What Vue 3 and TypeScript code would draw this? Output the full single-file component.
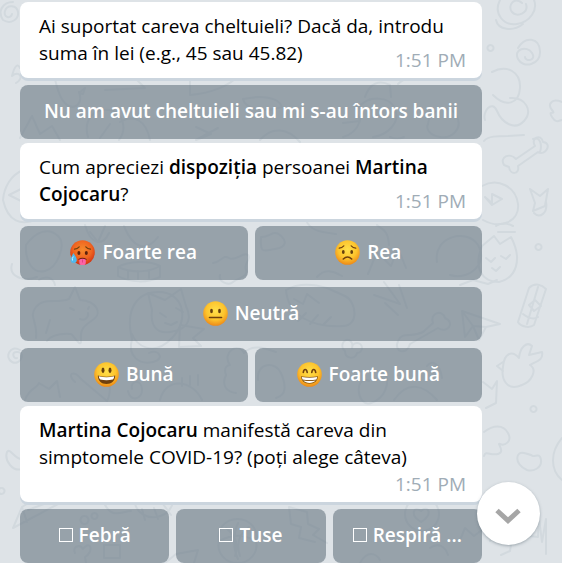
<script setup lang="ts">
import { ref } from 'vue'

type Mood = 'hot' | 'worried' | 'neutral' | 'happy' | 'beaming'

interface Part {
  text: string
  strong?: boolean
}

interface Answer {
  label: string
  mood?: Mood
}

interface Symptom {
  id: string
  label: string
}

const time = '1:51 PM'

const expenses: Part[] = [
  { text: 'Ai suportat careva cheltuieli? Dacă da, introdu suma în lei (e.g., 45 sau 45.82)' },
]

const moodQuestion: Part[] = [
  { text: 'Cum apreciezi ' },
  { text: 'dispoziția', strong: true },
  { text: ' persoanei ' },
  { text: 'Martina Cojocaru', strong: true },
  { text: '?' },
]

const symptomQuestion: Part[] = [
  { text: 'Martina Cojocaru', strong: true },
  { text: ' manifestă careva din simptomele COVID-19? (poți alege câteva)' },
]

const messages: { parts: Part[]; rows: Answer[][]; symptoms?: Symptom[] }[] = [
  { parts: expenses, rows: [[{ label: 'Nu am avut cheltuieli sau mi s-au întors banii' }]] },
  {
    parts: moodQuestion,
    rows: [
      [{ label: 'Foarte rea', mood: 'hot' }, { label: 'Rea', mood: 'worried' }],
      [{ label: 'Neutră', mood: 'neutral' }],
      [{ label: 'Bună', mood: 'happy' }, { label: 'Foarte bună', mood: 'beaming' }],
    ],
  },
  {
    parts: symptomQuestion,
    rows: [],
    symptoms: [
      { id: 'fever', label: 'Febră' },
      { id: 'cough', label: 'Tuse' },
      { id: 'breath', label: 'Respiră ...' },
    ],
  },
]

const selected = ref<string[]>([])
</script>

<template>
  <main class="chat">
    <svg class="wallpaper" viewBox="0 0 562 563" preserveAspectRatio="xMidYMid slice" aria-hidden="true">
      <!-- left edge -->
      <path d="M3 20c-6-9 0-18 10-18M3 20c8 5 16-1 15-8s-11-8-13-1 6 8 7 3M12 76c2-8 5-14 8-8M12 76c7-6 13 2 4 7M3 200c1-13 8-25 20-30M3 200c5 22 18 26 34 19M9 195l12-6v12zM20 350c-10-6-16 8-8 12s14-9 6-10-4 8-1 6M7 452c3-5 8 8 15 7M7 452c-3 9 6 20 15 17M2 488a3 3 0 1 1-1 0M13 528l9-21 38-24M13 528l45-24M22 507l5 15M28 510l32-12" />
      <!-- behind the first answer -->
      <path d="M55 79c3 14 7 24 14 27s14-3 10-14M105 90l40-2-10-10M79 93l6-5-2 6zM88 137c-5-17 6-29 21-27s18 20 10 30M120 122c14-8 26-2 30 18M110 124l-10 14M20 138l12-22 8 18 12-8 8 14M190 95v-17M190 95c23-2 40-10 48-19M196 127l15 7-15 6 22-12M243 99c18-4 36-2 39 8M243 99c2 10 22 14 39 8M260 140c12-14 28-12 40 2M343 137c18-5 21-24 15-33M343 123l17-2-5-13 15-9M365 97c5-15 15-17 25-12l1 12M359 107c9-11 30-12 36 2s-8 26-22 28M390 137c4 2 10 2 14 0M398 84c8-8 17-5 25-14M428 124c1-14 20-22 28-9s-4 24-16 22-14-9-12-13" />
      <!-- top right -->
      <path d="M496 20c2 10 17 12 27 4M500 0c-7 14 4 26 17 24s21-14 17-24M522 3c-8-7-15 3-10 9s17 1 14-8M518 48c7-12 21-11 22 3s-17 18-22 8 9-14 14-6-7 9-7 4M490 51a3 3 0 1 1 1 0M492 72c15-8 29 0 28 16s-14 20-27 7M510 98c16-1 23 13 14 23s-22 2-27-10-15 1-12 9M562 102c-10-4-15 2-10 8s-5-1 0 7 8 2 11 3M484 141c4-5 13-5 24-5l16-1M533 139c8-3 9 7 7 13" />
      <!-- bone, balloon and small signs -->
      <path d="M504 165c-5-8 6-13 12-6l19-13c-5-8 6-13 8-4 10 1 2 15-5 10l-20 14c2 9-8 9-9 1zM482 186c16-9 34 1 36 18s-17 26-35 16M485 197l7 6v-9l10 5-10 6zM530 189l10 7 8-7-3 17-12 5 2-8zM534 213c6 6 14 0 12-11M538 250a3 3 0 1 1 1 0" />
      <!-- behind the mood answers -->
      <path d="M26 245c10-14 23-18 32-9s-1 32-13 35-20-9-19-26M12 264c-4 13 12 18 25 13M85 225c6 21 18 21 24 8M90 232l8 10 7-16M124 226c11 27 25 23 34 11M118 267c10-6 31-7 42-1v11c-12 6-30 6-42-1zM118 267c14 6 30 6 42-1M128 271v7M138 271v8M149 270v8M213 263c9-1 10-9 16-5s15-7 19-3-5 8-2 15-9 8-13 12-15 0-13-7M261 237c8 1 12-8 19-2s7 12-5 14-15 5-14-12" />
      <path d="M306 220c4 11 15 12 30 14M377 225c5 5 11 4 12 20M437 262c-4-26 30-34 41-17s-8 36-28 30M482 246l12-10 6 8 11-7c12 23 5 41-12 45-17 0-26-14-17-36M486 258l5 4 4-4M501 256l5 3 4-4M492 268l4 3 4-4M513 226c-8-4-13-3-17 0M515 232h-17M368 274l9-22 14 14 7-18 8 20M317 277c8-9 16-6 25-1" />
      <path d="M36 338c2-17-8-21 0-31s20-3 33-8l6-12 5 13c17 1 22 13 14 19s-14 8-13 20-8-5-10-5-17-2-24 7M70 308l4 2M88 309l1-2M80 319c4 2 9-1 8-6M50 320l-4 13M39 280c5-4 14-4 16 5M132 339c-7-29 4-47 27-47s32 26 13 46-36 7-40-4M152 310l-4-17 17 7 16-11 5 17c8 17-2 24-16 26s-20-7-18-22M160 313l6 4M176 308l7 4M165 323l6 2 6-3M132 339c-5 18 8 26 21 23s5-14-4-9M180 325l24 4-11 9 8 8-22 1z" />
      <path d="M286 290c12-7 28-6 41-2l18 8c12 6 14 30-2 30-30 2-55-10-57-36M294 299l9 5 4-10 12 9M298 321l8-8M310 324l8-9M323 325l8-8M374 295l26 9-16-22M385 303l13 12M399 285l8 23M398 341c4-10 13-3 25-9l10-9c-4-9 9-15 12-5 11 5 2 16-7 10l-28 16c-3 12-17 8-12-3M462 311l38 13-14 3-7 13-6-14-8 11zM462 311l11 15 13 1M460 285l13-5 15 4 9-4" />
      <path d="M529 288c6-6 13-3 17 1l-12 36c-5 4-14 1-16-3zM538 287l-11 37M541 306l-7 5-5-6 6-5zM523 314c5 4 10 6 15 3M503 367c1-14 9-17 16-9 1-11 8-17 13-12l-3 9 13-3c2 9-8 10-12 13 8 5 1 17-8 20-16 7-21-7-19-18zM503 371l-6-5 6-4M533 412a3 3 0 1 1 1 0M483 382l9 7 5-8-1 22-10 5" />
      <path d="M75 382c-9-8-1-13 6-3l26 22c5-8 2-17 3-27M25 400c5-13 12-11 14-17l10 6 8-8 3 16M128 391c2 12 15 8 14-2s-12-9-10 0M160 400c6-24 33-20 42 0M182 378v8M190 376v9M198 375v10M226 375c-3-8 2-10 4-10-9-12 8-24 14-12 9-10 23-4 32-1M226 375c-5 11 1 17 10 18M258 380c-2-18 18-19 23-7s6 22-5 25M345 351a5 6 0 1 1 7-3a5 5 0 1 1 5 5c-2 7-12 6-12-2M369 381c-15-7-13 27 2 22s18-20 15-28M394 400c14-20 30-15 43 0M427 366c5-7 13-2 15 12" />
      <!-- bottom right -->
      <path d="M484 432c9-7 19-8 24 1s-4 13-8 11 6 8-2 10-12-4-14 2M527 470c-14-7-11-19-3-17s7 2 9 3 7-4 8 4-8 12-14 10zM562 438c-12 14-12 32 0 42M521 535l17 2 1-19 3 24 4-23v35M490 541l6-8 7 7 10-8-3 19-9 4" />
      <!-- behind the symptom answers -->
      <path d="M104 503c8 17 18 8 27 8M135 504c6 20 36 16 38-3M142 509l3 11M154 508l4 11M163 504l8 11M94 519a3 3 0 1 1 1 0M84 524a4 4 0 1 1 1 0M75 553c-3-7 5-9 8-4 8-10 11 3 2 8l1 6M104 545h16v13h-16zM219 541a19 18 0 1 1 37 0a19 18 0 1 1-37 0M219 541c14-7 24-7 37 0M238 523c-5 11-5 26 0 36M226 528c10 8 13 17 9 28M249 527c-10 7-13 17-9 29M165 563l11-9 22-4-4 13M289 507l18 5 1 12 11 5-6 6 14 8M289 507l2 17 10 3-2 11 16 4M360 563c7-13 16-10 20-3M405 514a17 17 0 1 1 34 0a17 17 0 1 1-34 0M421 522c-12-7-7-17 0-11 7-7 13 4 0 11zM460 540l5-12 9 8 8-6M430 548c8-6 15-2 18 7" />
    </svg>

    <section v-for="(message, index) in messages" :key="index" class="group">
      <article class="bubble">
        <p class="body">
          <template v-for="(part, n) in message.parts" :key="n">
            <strong v-if="part.strong">{{ part.text }}</strong>
            <template v-else>{{ part.text }}</template>
          </template>
        </p>
        <time class="time" datetime="13:51">{{ time }}</time>
      </article>

      <div v-for="(row, r) in message.rows" :key="r" class="row">
        <button v-for="answer in row" :key="answer.label" type="button" class="answer">
          <svg v-if="answer.mood" class="emoji" viewBox="0 0 25 25" aria-hidden="true">
            <defs>
              <radialGradient :id="'skin-' + answer.mood" cx=".5" cy=".38" r=".62">
                <template v-if="answer.mood === 'hot'">
                  <stop offset="0" stop-color="#f58a2c" />
                  <stop offset=".6" stop-color="#ef6420" />
                  <stop offset="1" stop-color="#cf3213" />
                </template>
                <template v-else>
                  <stop offset="0" stop-color="#ffe04a" />
                  <stop offset=".6" stop-color="#fdc42d" />
                  <stop offset="1" stop-color="#ed8a18" />
                </template>
              </radialGradient>
            </defs>
            <circle cx="12.5" cy="12.5" r="12.3" :fill="`url(#skin-${answer.mood})`" />
            <g v-if="answer.mood === 'hot'">
              <path d="M4.5 9.2Q7.5 9 9.2 6.8M15.8 6.8Q17.5 9 20.5 9.2" class="line" />
              <ellipse cx="8.9" cy="13" rx="1.5" ry="1.9" fill="#5c210c" />
              <ellipse cx="16.3" cy="13" rx="1.5" ry="1.9" fill="#5c210c" />
              <path d="M8.5 19q4-2.6 8 0v1h-8z" fill="#6b1d10" />
              <path d="M9.3 19.4q3.2-1.2 6.5 0v3a3.2 3 0 0 1-6.5 0z" fill="#fb63a5" />
              <path d="M12.5 19.5v3" stroke="#d83b7c" stroke-width=".8" />
              <path d="M3.5 13C2 16 .8 17.5.8 20a3 3 0 0 0 6 0c0-2.500-1.800-4-3.300-7z" fill="#4fb9ee" />
              <path d="M3.300 16.500q-1.500 2-.8 4" stroke="#c8f0ff" stroke-width="1" fill="none" />
            </g>
            <g v-else-if="answer.mood === 'worried'">
              <path d="M4.200 8.200Q7 8 8.800 5.800M16.200 5.800Q18 8 20.800 8.200" class="line" />
              <ellipse cx="8.300" cy="12" rx="1.400" ry="1.900" fill="#66400d" />
              <ellipse cx="16.700" cy="12" rx="1.400" ry="1.900" fill="#66400d" />
              <path d="M8.300 19q4.200-4 8.400 0" class="line thick" />
            </g>
            <g v-else-if="answer.mood === 'neutral'">
              <ellipse cx="8.500" cy="10" rx="1.400" ry="2.200" fill="#66400d" />
              <ellipse cx="16.500" cy="10" rx="1.400" ry="2.200" fill="#66400d" />
              <path d="M6.500 16.500h12" class="line thick" />
            </g>
            <g v-else-if="answer.mood === 'happy'">
              <ellipse cx="9" cy="8.300" rx="1.500" ry="2.900" fill="#66400d" />
              <ellipse cx="16" cy="8.300" rx="1.500" ry="2.900" fill="#66400d" />
              <path d="M3.800 13.500q8.700 2.400 17.400 0c0 5-3.700 8.500-8.700 8.500s-8.700-3.500-8.700-8.500z" fill="#70400e" />
              <path d="M4.800 14.300q7.700 2 15.400 0c-.2 1.700-.8 3-1.500 3.300q-6.200 1.200-12.400 0c-.8-.5-1.300-1.600-1.500-3.300z" fill="#fff" />
            </g>
            <g v-else>
              <path d="M6.300 10.500q.3-3 1.900-3t2 3M14.800 10.500q.3-3 1.900-3t2 3" class="line thick" />
              <path d="M4 14.200q8.500 1.600 17 0c0 4.500-3.500 7.500-8.500 7.500S4 18.700 4 14.200z" fill="#8a5a18" />
              <path d="M4.800 15q7.700 1.400 15.400 0-.2 1.400-.8 2.400-6.900 1.300-13.800 0-.6-1-.8-2.400zM6.300 18.500q6.200 1.100 12.400 0c-2.800 3.300-9.600 3.300-12.400 0z" fill="#fff" />
            </g>
          </svg>
          <span>{{ answer.label }}</span>
        </button>
      </div>

      <div v-if="message.symptoms" class="row">
        <label v-for="symptom in message.symptoms" :key="symptom.id" class="answer symptom" :for="symptom.id">
          <input :id="symptom.id" v-model="selected" type="checkbox" class="box" :value="symptom.id" />
          <span>{{ symptom.label }}</span>
        </label>
      </div>
    </section>

    <button type="button" class="scroll-down" aria-label="Scroll down">
      <svg viewBox="0 0 63 63" aria-hidden="true">
        <path d="M20 28.500L31 38.500L42 28.500" fill="none" stroke="#a6a6a6" stroke-width="5" />
      </svg>
    </button>
  </main>
</template>

<style>
body {
  margin: 0;
  background: #dee3e7;
}
</style>

<style scoped>
.chat {
  position: relative;
  box-sizing: border-box;
  min-height: 100vh;
  padding: 2px 80px 0 20px;
  display: flex;
  flex-direction: column;
  gap: 4px;
  overflow: hidden;
  background: #dee3e7;
  font-family: "Open Sans", "Noto Sans", sans-serif;
  font-size: 19px;
  line-height: 27px;
  color: #000;
}

.wallpaper {
  position: absolute;
  inset: 0;
  width: 100%;
  height: 100%;
  fill: none;
  stroke: #d2d9de;
  stroke-width: 2;
  stroke-linecap: round;
  stroke-linejoin: round;
}

.group {
  position: relative;
  display: flex;
  flex-direction: column;
  gap: 7px;
}

.bubble {
  position: relative;
  padding: 11px 16px 11px 19px;
  border-radius: 8px;
  background: #fff;
  box-shadow: 0 3px 0 #cbd5de;
}

.body {
  display: flow-root;
  margin: 0;
}

/* keeps the last line clear of the time stamp */
.body::after {
  content: "";
  float: right;
  width: 80px;
  height: 20px;
}

.body strong {
  font-weight: 600;
}

.time {
  position: absolute;
  right: 16px;
  bottom: 4px;
  color: #a0acb6;
}

.row {
  display: grid;
  grid-auto-flow: column;
  grid-auto-columns: minmax(0, 1fr);
  gap: 7px;
}

.answer {
  display: flex;
  align-items: center;
  justify-content: center;
  gap: 7px;
  height: 54px;
  margin: 0;
  padding: 0 8px 2px;
  box-sizing: border-box;
  border: 0;
  border-radius: 8px;
  background: rgba(104, 118, 130, 0.6);
  color: #fff;
  font: inherit;
  font-weight: 600;
  white-space: nowrap;
  cursor: pointer;
}

.symptom {
  gap: 6px;
}

.emoji {
  flex: none;
  width: 25px;
  height: 25px;
}

.line {
  fill: none;
  stroke: #70400e;
  stroke-width: 1.2px;
  stroke-linecap: round;
}

.thick {
  stroke-width: 1.6px;
}

.box {
  appearance: none;
  flex: none;
  width: 14px;
  height: 14px;
  margin: 0;
  border: 1px solid #fff;
}

.box:checked {
  background: #fff;
}

.scroll-down {
  position: fixed;
  right: 22px;
  bottom: 18px;
  width: 63px;
  height: 63px;
  padding: 0;
  border: 0;
  border-radius: 50%;
  background: #fff;
  box-shadow: 0 1px 3px rgba(90, 105, 115, 0.5);
  cursor: pointer;
}

.scroll-down svg {
  display: block;
  width: 100%;
  height: 100%;
}
</style>
